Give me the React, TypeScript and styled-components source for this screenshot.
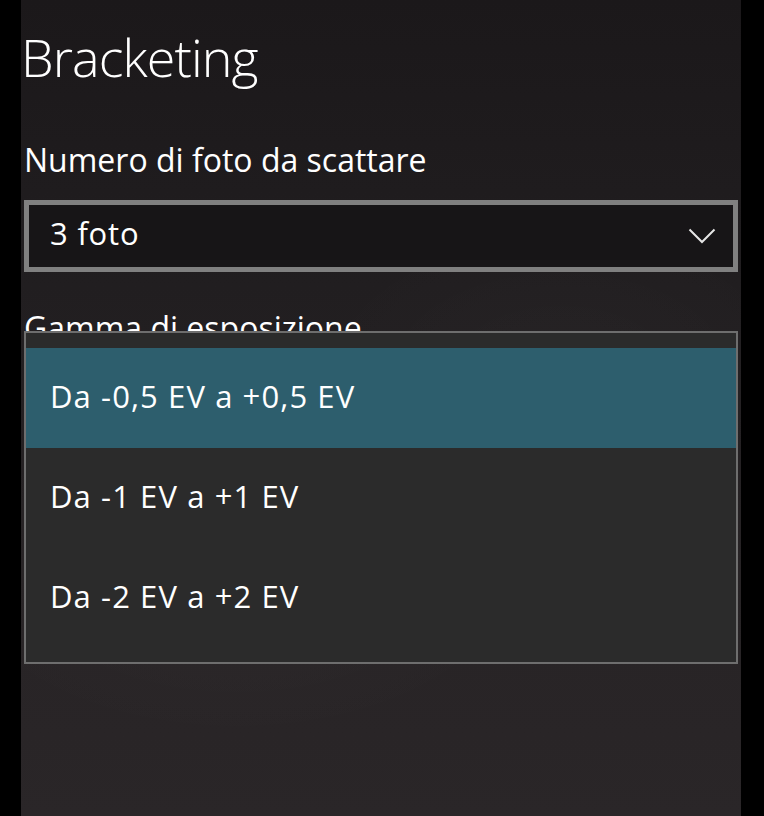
import React from "react";
import styled, { createGlobalStyle } from "styled-components";

const GlobalStyle = createGlobalStyle`
  html, body {
    margin: 0;
    padding: 0;
    background: #000;
  }
  body {
    font-family: "Open Sans", "Noto Sans", sans-serif;
    color: #fff;
  }
`;

const Screen = styled.div`
  display: flex;
  width: 764px;
  height: 816px;
  background: #000;
  overflow: hidden;
`;

const Panel = styled.main`
  width: 720px;
  height: 816px;
  margin-left: 21px;
  box-sizing: border-box;
  padding: 25px 3px 0;
  display: flex;
  flex-direction: column;
  background:
    radial-gradient(ellipse 60% 30% at 30% 70%, rgba(255, 255, 255, 0.025), transparent 70%),
    radial-gradient(ellipse 50% 25% at 75% 45%, rgba(255, 255, 255, 0.02), transparent 70%),
    linear-gradient(180deg, #1b181a 0%, #211e20 35%, #272325 70%, #2a2628 100%);
`;

const Title = styled.h1`
  margin: 0 0 51px -3px;
  font-size: 52px;
  font-weight: 300;
  line-height: 64px;
  letter-spacing: -0.9px;
  color: #fff;
`;

const Field = styled.section<{ $gap?: number }>`
  position: relative;
  display: flex;
  flex-direction: column;
  margin-bottom: ${(p) => p.$gap ?? 0}px;
`;

const Label = styled.div`
  font-size: 32px;
  line-height: 40px;
  font-weight: 400;
  color: #fff;
  margin-bottom: 20px;
`;

const ComboBox = styled.div`
  height: 72px;
  box-sizing: border-box;
  border: 5px solid #808080;
  background: #171517;
  display: flex;
  align-items: center;
  justify-content: space-between;
  padding: 0 17px 6px 21px;
`;

const ComboValue = styled.span`
  font-size: 31px;
  line-height: 56px;
  letter-spacing: 0.8px;
  color: #fff;
`;

const Chevron = styled.svg`
  width: 28px;
  height: 16px;
  margin-top: 6px;
  flex: none;
`;

const Popup = styled.ul`
  position: absolute;
  top: 23px;
  left: 0;
  right: 0;
  margin: 0;
  padding: 15px 0 14px;
  list-style: none;
  background: #2b2b2b;
  border: 2px solid #6e6e6e;
`;

const Option = styled.li<{ $selected?: boolean }>`
  height: 100px;
  box-sizing: border-box;
  padding: 0 0 4px 24px;
  font-size: 31px;
  line-height: 96px;
  letter-spacing: 1.1px;
  color: #fff;
  background: ${(p) => (p.$selected ? "#2d5e6d" : "transparent")};
`;

const options = [
  "Da -0,5 EV a +0,5 EV",
  "Da -1 EV a +1 EV",
  "Da -2 EV a +2 EV",
];

const ChevronIcon = () => (
  <Chevron viewBox="0 0 28 16">
    <polyline
      points="1.5,1.5 14,14 26.5,1.5"
      fill="none"
      stroke="#e6e6e6"
      strokeWidth="2"
    />
  </Chevron>
);

export default function App() {
  return (
    <>
      <GlobalStyle />
      <Screen>
        <Panel>
          <Title>Bracketing</Title>
          <Field $gap={36}>
            <Label>Numero di foto da scattare</Label>
            <ComboBox>
              <ComboValue>3 foto</ComboValue>
              <ChevronIcon />
            </ComboBox>
          </Field>
          <Field>
            <Label>Gamma di esposizione</Label>
            <Popup>
              {options.map((o, i) => (
                <Option key={o} $selected={i === 0}>
                  {o}
                </Option>
              ))}
            </Popup>
          </Field>
        </Panel>
      </Screen>
    </>
  );
}
